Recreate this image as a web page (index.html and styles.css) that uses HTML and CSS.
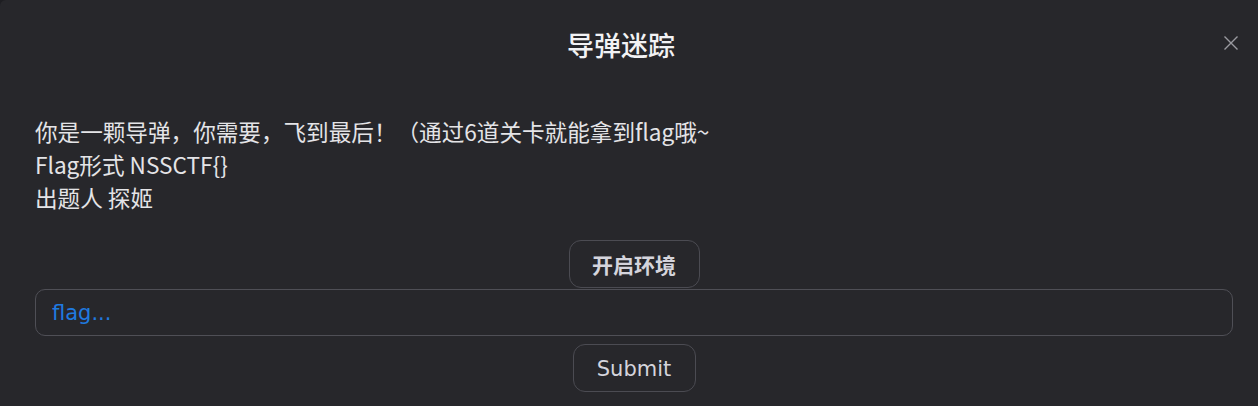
FILE: index.html
```html
<!DOCTYPE html>
<html lang="zh-CN">
<head>
  <meta charset="UTF-8">
  <meta name="viewport" content="width=device-width, initial-scale=1">
  <title>导弹迷踪</title>
  <link rel="stylesheet" href="styles.css">
</head>
<body>
  <div class="modal">
    <div class="modal-header">
      <h2 class="modal-title">导弹迷踪</h2>
      <button class="close" aria-label="close">
        <svg width="16" height="16" viewBox="0 0 16 16"><path d="M1.5 1.5 L14.5 14.5 M14.5 1.5 L1.5 14.5" stroke="currentColor" stroke-width="1.4" fill="none"/></svg>
      </button>
    </div>
    <div class="modal-body">
      <div class="desc">
        <p>你是一颗导弹，你需要，飞到最后！（通过6道关卡就能拿到flag哦~</p>
        <p>Flag形式 NSSCTF{}</p>
        <p>出题人 探姬</p>
      </div>
      <div class="center">
        <button class="btn btn-bold">开启环境</button>
      </div>
      <input class="flag-input" type="text" placeholder="flag...">
      <div class="center">
        <button class="btn btn-submit">Submit</button>
      </div>
    </div>
  </div>
</body>
</html>
```

FILE: styles.css
```css
html, body { margin: 0; padding: 0; background: #1e1e22; }
body { font-family: "Noto Sans CJK SC", "Noto Sans", sans-serif; color: #e4e4e7; }
.modal { background: #27272b; height: 406px; border-radius: 6px 0 0 0; box-sizing: border-box; }
.modal-header { position: relative; height: 92px; display: flex; align-items: center; justify-content: center; padding-right: 16px; }
.modal-title { margin: 0; font-size: 27px; font-weight: 500; color: #f2f2f4; line-height: 1; position: relative; top: -2px; }
.close { position: absolute; right: 19px; top: 35px; background: none; border: none; padding: 0; color: #9a9aa0; cursor: pointer; }
.close svg { display: block; }
.modal-body { padding: 0 25px 0 35px; }
.desc { font-size: 22.6px; line-height: 33px; margin-top: 23px; }
.desc p { margin: 0; }
.center { display: flex; justify-content: center; }
.btn { font-family: "DejaVu Sans", "Noto Sans CJK SC", sans-serif; font-size: 21px; color: #d4d4dc; background: transparent; border: 1px solid #4b4b52; border-radius: 12px; height: 48px; cursor: pointer; }
.btn-bold { font-family: "Noto Sans CJK SC", sans-serif; font-weight: 700; width: 131px; margin-top: 26px; }
.btn-submit { width: 123px; margin-top: 8px; padding-top: 3px; }
.flag-input { display: block; width: 100%; box-sizing: border-box; height: 47px; margin-top: 1px; padding: 0 16px; background: transparent; border: 1px solid #4f4f56; border-radius: 10px; font-family: "DejaVu Sans", sans-serif; font-size: 21px; color: #e4e4e7; outline: none; }
.flag-input::placeholder { color: #1f7ae0; }
```
